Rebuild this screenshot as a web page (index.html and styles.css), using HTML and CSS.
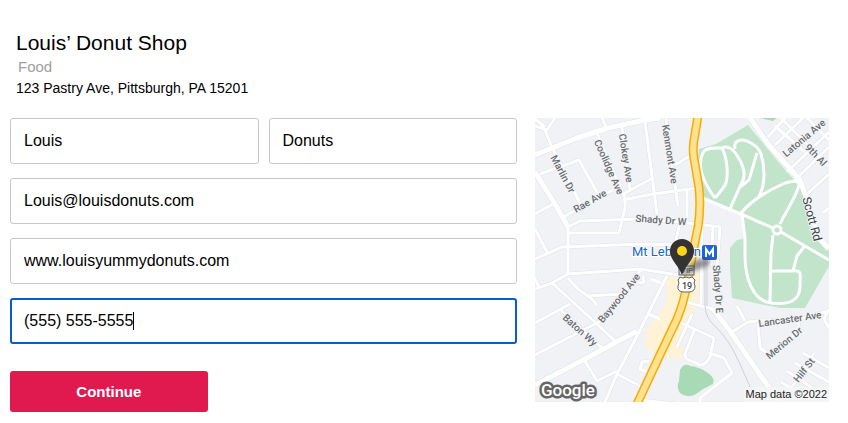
FILE: index.html
```html
<!DOCTYPE html>
<html lang="en">
<head>
  <meta charset="utf-8">
  <meta name="viewport" content="width=device-width, initial-scale=1">
  <title>Louis’ Donut Shop</title>
  <link rel="stylesheet" href="styles.css">
</head>
<body>
  <header class="business">
    <h1 class="business-name">Louis’ Donut Shop</h1>
    <p class="business-category">Food</p>
    <p class="business-address">123 Pastry Ave, Pittsburgh, PA 15201</p>
  </header>

  <main class="content">
    <form class="contact-form">
      <div class="name-row">
        <input type="text" id="firstName" aria-label="First name" value="Louis">
        <input type="text" id="lastName" aria-label="Last name" value="Donuts">
      </div>
      <input type="email" id="email" aria-label="Email" value="Louis@louisdonuts.com">
      <input type="text" id="website" aria-label="Website" value="www.louisyummydonuts.com">
      <div class="phone-field">
        <input type="tel" id="phone" aria-label="Phone" value="(555) 555-5555">
        <span class="caret"></span>
      </div>
      <button type="submit" class="continue-btn">Continue</button>
    </form>

    <figure class="map">
      <svg viewBox="0 0 294 284" role="img" aria-label="Map of the business location">
        <defs>
          <filter id="soften" x="-50%" y="-50%" width="200%" height="200%"><feGaussianBlur stdDeviation="2"/></filter>
          <g id="streets">
            <path d="M0 8L12 12L20 0M0 1L10 9M10 12L16 27L46 87M28 99L78 72M5 56L44 42L63 76M62 15L90 80L90 90L84 115H33M87 9L95 72M110 4L122 96M131 1L143 88M88 76L118 60M88 82L118 76L163 70M140 47L158 36M67 0L71 9M0 96L18 86M0 111L13 136M145 104L141 122"/>
            <path d="M33 109L45 103L105 101L145 104L185 109L182 150M178 108L176 148M0 141L27 129L108 126L150 127M33 109V156M0 171L17 165L33 156L105 151L150 158M0 160L4 170M17 165L62 206L80 223M33 160L43 171L57 181L62 187M53 178L88 176L105 153L62 206M0 205L35 186M0 237L62 205M25 191L67 230"/>
            <path d="M132 158L113 196L102 218L82 256L70 284M50 243L62 263L82 253M82 256L105 268M113 196L125 201M116 161L126 165M103 165L109 164L108 158M114 243L107 244L105 251L112 254M105 282L150 287M142 203L179 220L175 239Q170 249 163 246L152 241Q149 239 150 236L160 210M174 235L189 240L197 255L165 280V284M157 196L142 229M151 184L178 191M167 109L166 186"/>
            <path d="M202 188L210 203M197 214L213 204L222 203L260 202L294 193M223 206L225 230L232 235M232 238L255 223L264 208L262 200M289 201L294 191M289 201L294 210M268 235L294 250M260 245L294 264M252 253L279 271M246 264L259 272M279 235L255 272"/>
            <path d="M233 19L250 0M240 27L268 0M252 54L294 14M260 62L294 29M272 76L294 56M288 95L294 90M246 0L294 49M240 8L270 34M272 0L294 22M152 72V105"/>
          </g>
          <g id="mainStreets">
            <path d="M0 37L42 20L73 10L110 2L125 0M0 54L20 86L33 109M0 267L50 241L102 213M215 0L233 26L265 62L273 84L284 120L294 131M178 191L195 213L235 271L245 284"/>
          </g>
        </defs>

        <rect width="294" height="284" fill="#f1f2f5"/>

        <!-- parks and the commercial strip -->
        <path fill="#c1e4cb" d="M213 7L181 26L164 31L162 50L166 79L207 97L208 121L202 122L195 130V150L197 180L225 186L245 190L270 190L278 176L294 148V131L275 108L266 70L240 40Z"/>
        <path fill="#a8dab5" d="M145 252Q149 244 155 248Q165 249 173 255Q181 261 178 266Q169 270 161 276Q152 281 145 275Q141 269 144 263Z"/>
        <path fill="#a8dab5" d="M225 0H242L238 3Z"/>
        <path fill="#fef3d6" d="M131 160L165 154V185L156 196L142 229L148 231L146 241L138 240L118 236L110 228L112 212L132 185Z"/>

        <use href="#streets" class="street-edge"/>
        <use href="#mainStreets" class="main-edge"/>
        <use href="#streets" class="street"/>
        <use href="#mainStreets" class="main-street"/>

        <!-- rail line -->
        <path class="rail" d="M170 136V188Q171 201 180 208Q195 223 204 244L217 273M172 136V188"/>

        <!-- park paths -->
        <path class="park-path" d="M180 80C165 60 162 45 169 33C174 29 180 30 187 30C193 42 193 57 191 65Q188 71 180 80M187 30C193 27 199 32 203 39C210 50 211 59 206 66L195 91M200 31C198 22 207 20 214 24Q223 28 226 36C230 49 231 67 223 80M222 35L214 62L205 69M206 95C220 79 235 72 250 65Q263 61 264 66C264 74 250 95 245 106M165 79L206 96L238 110M246 114L294 142M207 96L210 121V138C210 160 218 183 236 185C252 187 265 184 265 168C265 155 268 152 256 153H235M258 153L262 138L269 129M238 117L236 135L235 184"/>
        <circle class="park-path" cx="242" cy="112" r="4"/>

        <path fill="none" stroke="#f9ab00" stroke-width="9" d="M163 -2L159 22Q157 34 160 46L164 70Q166 90 163 109L158 134L152 166Q149 184 142 201L123 241L102 286"/>
        <path fill="none" stroke="#fde293" stroke-width="6" d="M163 -2L159 22Q157 34 160 46L164 70Q166 90 163 109L158 134L152 166Q149 184 142 201L123 241L102 286"/>

        <g class="labels">
          <text transform="translate(28 56) rotate(62)">Marlin Dr</text>
          <text transform="translate(74 49) rotate(66)">Coolidge Ave</text>
          <text transform="translate(91 40) rotate(81)">Clokey Ave</text>
          <text transform="translate(135 36) rotate(81)">Kenmont Ave</text>
          <text transform="translate(55 83) rotate(-30)">Rae Ave</text>
          <text transform="translate(126 102) rotate(4)">Shady Dr W</text>
          <text transform="translate(269 20) rotate(-40)">Latonia Ave</text>
          <text transform="translate(281 37) rotate(46)">9th Al</text>
          <text transform="translate(84 180) rotate(-51)">Baywood Ave</text>
          <text transform="translate(45 212) rotate(42)">Baton Wy</text>
          <text transform="translate(183 171) rotate(86)">Shady Dr E</text>
          <text transform="translate(255 201) rotate(-8)">Lancaster Ave</text>
          <text transform="translate(249 225) rotate(-40)">Merion Dr</text>
          <text transform="translate(269 252) rotate(-52)">Hilf St</text>
          <text class="label-main" transform="translate(277 101) rotate(75)">Scott Rd</text>
        </g>

        <!-- station, route shield -->
        <text class="station" x="97" y="138">Mt Lebanon</text>
        <rect x="167" y="127" width="15" height="15" rx="2" fill="#1a66dc"/>
        <path d="M171 139V131L174.500 136L178 131V139" fill="none" stroke="#fff" stroke-width="2"/>
        <rect x="144" y="148" width="15" height="9" fill="#ddd" stroke="#666"/>
        <text class="tag" x="152" y="155">VIP</text>
        <path d="M145 159L148 160L151 159L154 160L157 159L160 162Q158 165 160 168Q160 174 154 174H149Q142 174 143 168Q145 165 143 162Z" fill="#fff" stroke="#666"/>
        <text class="route" x="152" y="171">19</text>

        <!-- pin -->
        <path d="M147 157L158 144Q168 138 175 142Q176 149 164 151Z" fill="#333" opacity=".5" filter="url(#soften)"/>
        <path d="M147 157C144 148 135 142 135 133A12 12 0 0 1 159 133C159 142 150 148 147 157Z" fill="#333"/>
        <circle cx="147" cy="133" r="5" fill="#ffd416"/>

        <text class="google" x="6" y="278">Google</text>
      </svg>
      <figcaption class="map-credit">Map data ©2022</figcaption>
    </figure>
  </main>

  <script src="form.js"></script>
</body>
</html>
```
FILE: styles.css
```css
* {
  box-sizing: border-box;
}

body {
  margin: 0;
  padding: 30px 19px 10px 10px;
  font-family: "Liberation Sans", Arial, sans-serif;
  background-color: #fff;
  color: #000;
}

.business {
  padding-left: 6px;
  margin-bottom: 20px;
}

.business-name {
  margin: 0;
  font-size: 21px;
  font-weight: normal;
  line-height: 26px;
}

.business-category {
  margin: 0;
  padding-left: 2px;
  font-size: 15px;
  line-height: 22px;
  color: #a0a0a0;
}

.business-address {
  margin: 0;
  font-size: 14px;
  line-height: 20px;
}

.content {
  display: grid;
  grid-template-columns: 507fr 294fr;
  gap: 18px;
  align-items: start;
}

.contact-form {
  display: flex;
  flex-direction: column;
  gap: 14px;
}

.name-row {
  display: grid;
  grid-template-columns: 1fr 1fr;
  gap: 10px;
}

input {
  display: block;
  width: 100%;
  height: 46px;
  padding: 0 13px;
  font-family: inherit;
  font-size: 16px;
  color: #000;
  background-color: #fff;
  border: 1px solid #c8c8c8;
  border-radius: 3px;
}

input:focus {
  padding: 0 12px;
  border: 2px solid #0b5cc7;
  outline: none;
}

.phone-field {
  position: relative;
}

#phone {
  caret-color: transparent;
}

.caret {
  position: absolute;
  top: 14px;
  left: 123px;
  width: 1px;
  height: 18px;
  background-color: #000;
}

.continue-btn {
  align-self: flex-start;
  width: 39%;
  height: 41px;
  margin-top: 13px;
  font-family: inherit;
  font-size: 15px;
  font-weight: bold;
  color: #fff;
  background-color: #e0194f;
  border: none;
  border-radius: 3px;
  cursor: pointer;
}

.map {
  position: relative;
  margin: 0;
}

.map svg {
  display: block;
  width: 100%;
}

.map-credit {
  position: absolute;
  right: 0;
  bottom: 0;
  padding: 0 2px;
  font-size: 11px;
  line-height: 15px;
  color: #222;
  background-color: rgba(245, 245, 245, 0.8);
}

.street,
.street-edge,
.main-street,
.main-edge,
.park-path,
.rail {
  fill: none;
  stroke: #fff;
  stroke-linejoin: round;
}

.street {
  stroke-width: 3px;
}

.street-edge {
  stroke: #dfe2e6;
  stroke-width: 4px;
}

.main-street {
  stroke-width: 5px;
}

.main-edge {
  stroke: #dfe2e6;
  stroke-width: 6px;
}

.park-path {
  stroke-width: 3px;
}

.rail {
  stroke: #cfd1d4;
  stroke-width: 1px;
}

.labels text {
  font-family: Roboto, sans-serif;
  font-size: 10px;
  font-weight: 500;
  fill: #6a6e73;
  stroke: #f4f5f7;
  stroke-width: 2px;
  paint-order: stroke;
  text-anchor: middle;
  dominant-baseline: central;
}

.labels .label-main {
  font-size: 12px;
  font-weight: 400;
  fill: #3c4043;
}

.station {
  font-family: Roboto, sans-serif;
  font-size: 13px;
  fill: #1967d2;
  stroke: #fff;
  stroke-width: 2px;
  paint-order: stroke;
}

.tag,
.route {
  font-family: Roboto, sans-serif;
  font-size: 8px;
  fill: #444;
  text-anchor: middle;
}

.route {
  font-size: 9px;
  font-weight: 500;
}

.google {
  font-family: Roboto, sans-serif;
  font-size: 17px;
  font-weight: 500;
  fill: #fff;
  stroke: #666;
  stroke-width: 5px;
  stroke-linejoin: round;
  paint-order: stroke;
}
```
FILE: form.js
```js
const phone = document.getElementById('phone');
phone.focus();
phone.setSelectionRange(phone.value.length, phone.value.length);
```
